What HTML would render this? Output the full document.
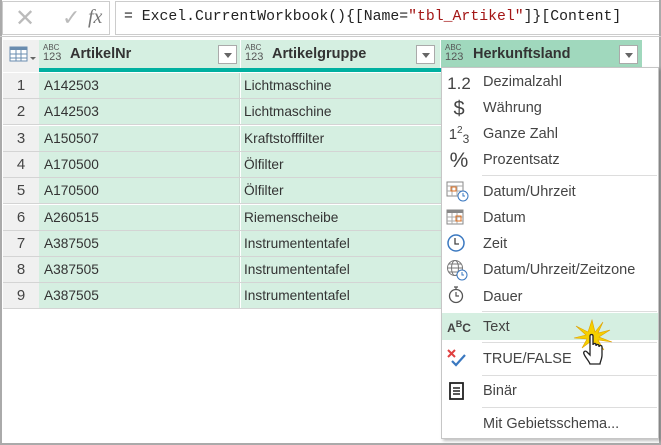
<!DOCTYPE html>
<html><head><meta charset="utf-8"><style>
*{margin:0;padding:0;box-sizing:border-box}
body{width:661px;height:445px;background:#fff;position:relative;overflow:hidden;font-family:"Liberation Sans",sans-serif;font-size:13px;color:#333}
.a{position:absolute}
.row{position:absolute;left:3px;height:26px;width:438px;border-bottom:1px solid #d4d4d4}
.num{position:absolute;left:0;top:0;width:36px;height:25px;background:#f0f0f0;text-align:center;line-height:25px;font-size:15px;color:#444}
.c1{position:absolute;left:36px;top:0;width:201px;height:25px;background:#d5efe1;border-right:1px solid #c8d8cf;line-height:26px;padding-left:5px;font-size:13.7px;color:#333}
.c2{position:absolute;left:238px;top:0;width:200px;height:25px;background:#d5efe1;line-height:26px;padding-left:3px;font-size:13.7px;color:#333}
.hd{position:absolute;top:40px;height:28px;background:#d5efe1}
.abc{position:absolute;top:3px;font-size:8px;line-height:9px;color:#555}
.abc b{font-size:11px;font-weight:normal;display:block;line-height:11px}
.ht{position:absolute;top:7px;font-weight:bold;font-size:14.5px;color:#333}
.dd{position:absolute;top:5px;width:19px;height:19px;background:#fff;border:1px solid #aaa}
.dd:after{content:"";position:absolute;left:5px;top:7px;border-left:4px solid transparent;border-right:4px solid transparent;border-top:5px solid #666}
.mi{position:absolute;left:483px;font-size:14.5px;color:#444;margin-top:3px}
.ic{position:absolute;left:446px;width:26px;text-align:center;color:#444;margin-top:3px}
.sep{position:absolute;left:482px;width:175px;height:1px;background:#ddd}
</style></head><body>
<div class="a" style="left:0;top:0;width:2px;height:445px;background:#aaa"></div>
<div class="a" style="left:0;top:443px;width:661px;height:2px;background:#aaa"></div>
<div class="a" style="left:659px;top:0;width:2px;height:445px;background:#aaa"></div>
<div class="a" style="left:2px;top:1px;width:108px;height:34px;border:1px solid #ccc;background:#fff"></div>
<div class="a" style="left:15px;top:4px;font-size:24px;color:#bbb">✕</div>
<div class="a" style="left:62px;top:5px;font-size:22px;color:#bbb">✓</div>
<div class="a" style="left:88px;top:6px;font-family:'Liberation Serif',serif;font-style:italic;font-size:20px;color:#777">fx</div>
<div class="a" style="left:115px;top:1px;width:544px;height:34px;border:1px solid #ccc;border-right:none"></div>
<div class="a" style="left:124px;top:9px;font-family:'Liberation Mono',monospace;font-size:14.8px;color:#222">= Excel.CurrentWorkbook(){[Name=<span style="color:#a31515">"tbl_Artikel"</span>]}[Content]</div>
<div class="a" style="left:0;top:36px;width:661px;height:1px;background:#ccc"></div>
<div class="a" style="left:3px;top:40px;width:36px;height:32px;background:#f0f0f0"></div>
<svg class="a" style="left:9px;top:46px" width="28" height="18"><rect x="1" y="1" width="17" height="14" fill="#fff" stroke="#6a8caf"/><rect x="1" y="1" width="17" height="3" fill="#6a8caf"/><path d="M1 8H18M1 12H18M7 4V15M12 4V15" stroke="#6a8caf"/><path d="M21 11l3 3 3-3z" fill="#666"/></svg>
<div class="hd" style="left:39px;width:201px"></div>
<div class="hd" style="left:241px;width:199px"></div>
<div class="hd" style="left:441px;width:201px;background:#a0d8bd"></div>
<div class="a" style="left:39px;top:68px;width:402px;height:4px;background:#00b0a0"></div>
<div class="abc" style="left:43px;top:43px">ABC<b>123</b></div><div class="ht" style="left:70px;top:46px">ArtikelNr</div><div class="dd" style="left:218px;top:45px"></div>
<div class="abc" style="left:245px;top:43px">ABC<b>123</b></div><div class="ht" style="left:272px;top:46px">Artikelgruppe</div><div class="dd" style="left:416px;top:45px"></div>
<div class="abc" style="left:445px;top:43px">ABC<b>123</b></div><div class="ht" style="left:473px;top:46px">Herkunftsland</div><div class="dd" style="left:619px;top:45px"></div>
<div class="row" style="top:73px"><div class="num">1</div><div class="c1">A142503</div><div class="c2">Lichtmaschine</div></div>
<div class="row" style="top:99px"><div class="num">2</div><div class="c1">A142503</div><div class="c2">Lichtmaschine</div></div>
<div class="row" style="top:126px"><div class="num">3</div><div class="c1">A150507</div><div class="c2">Kraftstofffilter</div></div>
<div class="row" style="top:152px"><div class="num">4</div><div class="c1">A170500</div><div class="c2">Ölfilter</div></div>
<div class="row" style="top:178px"><div class="num">5</div><div class="c1">A170500</div><div class="c2">Ölfilter</div></div>
<div class="row" style="top:205px"><div class="num">6</div><div class="c1">A260515</div><div class="c2">Riemenscheibe</div></div>
<div class="row" style="top:231px"><div class="num">7</div><div class="c1">A387505</div><div class="c2">Instrumententafel</div></div>
<div class="row" style="top:257px"><div class="num">8</div><div class="c1">A387505</div><div class="c2">Instrumententafel</div></div>
<div class="row" style="top:283px"><div class="num">9</div><div class="c1">A387505</div><div class="c2">Instrumententafel</div></div>
<div class="a" style="left:441px;top:67px;width:218px;height:372px;background:#fff;border:1px solid #c6c6c6;box-shadow:2px 2px 3px rgba(0,0,0,.25)"></div>
<div class="a" style="left:442px;top:313px;width:216px;height:27px;background:#d5efe1"></div>
<div class="sep" style="top:175px"></div><div class="sep" style="top:311px"></div><div class="sep" style="top:342px"></div><div class="sep" style="top:375px"></div><div class="sep" style="top:407px"></div>
<div class="ic" style="top:71px;font-size:17px">1.2</div><div class="mi" style="top:71px">Dezimalzahl</div>
<div class="ic" style="top:95px;font-size:20px">$</div><div class="mi" style="top:97px">Währung</div>
<div class="ic" style="top:122px;font-size:15px">1<sup style="font-size:10px">2</sup><sub style="font-size:12px">3</sub></div><div class="mi" style="top:123px">Ganze Zahl</div>
<div class="ic" style="top:146px;font-size:21px">%</div><div class="mi" style="top:149px">Prozentsatz</div>
<svg class="a" style="left:446px;top:181px" width="24" height="22"><rect x="1" y="1" width="16" height="14" fill="#fff" stroke="#888"/><path d="M1 5H17M1 10H17M6 5V15M11 5V15" stroke="#aaa"/><rect x="5" y="6" width="5" height="4" fill="none" stroke="#e07020"/><circle cx="17" cy="15" r="5" fill="#fff" stroke="#3a78c0"/><path d="M17 12v3h2" stroke="#3a78c0" fill="none"/></svg><div class="mi" style="top:181px">Datum/Uhrzeit</div>
<svg class="a" style="left:446px;top:209px" width="20" height="18"><rect x="1" y="1" width="16" height="14" fill="#fff" stroke="#888"/><rect x="1" y="1" width="16" height="3" fill="#888"/><path d="M1 8H17M1 12H17M6 4V15M11 4V15" stroke="#aaa"/><rect x="10" y="7" width="5" height="5" fill="none" stroke="#e07020"/></svg><div class="mi" style="top:207px">Datum</div>
<svg class="a" style="left:446px;top:233px" width="20" height="20"><circle cx="10" cy="10" r="8" fill="none" stroke="#3a78c0" stroke-width="1.5"/><path d="M9 5v6h4" stroke="#444" fill="none" stroke-width="1.3"/></svg><div class="mi" style="top:233px">Zeit</div>
<svg class="a" style="left:446px;top:259px" width="22" height="22"><circle cx="9" cy="9" r="7.5" fill="none" stroke="#777"/><ellipse cx="9" cy="9" rx="3.5" ry="7.5" fill="none" stroke="#777"/><path d="M1.5 9H16.5M3 5H15M3 13H15" stroke="#777"/><circle cx="16" cy="16" r="5" fill="#fff" stroke="#3a78c0"/><path d="M16 13v3h2" stroke="#3a78c0" fill="none"/></svg><div class="mi" style="top:259px">Datum/Uhrzeit/Zeitzone</div>
<svg class="a" style="left:448px;top:285px" width="18" height="20"><circle cx="8" cy="11" r="6.5" fill="none" stroke="#555" stroke-width="1.3"/><path d="M6 2h4M8 2v3M8 7v4h3" stroke="#555" fill="none" stroke-width="1.2"/></svg><div class="mi" style="top:286px">Dauer</div>
<div class="ic" style="top:316px;font-size:12px;font-weight:bold;color:#444">A<sup style="font-size:9px">B</sup>C</div><div class="mi" style="top:316px">Text</div>
<svg class="a" style="left:446px;top:348px" width="22" height="20"><path d="M2 2l7 7M9 2l-7 7" stroke="#e04040" stroke-width="2"/><path d="M6 13l4 4 9-10" stroke="#3a78c0" stroke-width="2.2" fill="none"/></svg><div class="mi" style="top:348px">TRUE/FALSE</div>
<svg class="a" style="left:448px;top:381px" width="18" height="20"><rect x="2" y="2" width="13" height="16" fill="#fff" stroke="#222" stroke-width="1.8"/><path d="M5 7h7M5 10h7M5 13h7" stroke="#222" stroke-width="1.5"/></svg><div class="mi" style="top:380px">Binär</div>
<div class="mi" style="top:413px">Mit Gebietsschema...</div>
<svg class="a" style="left:570px;top:318px" width="44" height="52"><path d="M22 2L25 14L33 4L28 15L40 12L29 19L42 24L28 22L34 32L25 24L22 34L20 24L12 30L17 21L4 20L16 17L6 8L18 14z" fill="#f5d000" stroke="#e0a000" stroke-width="0.6"/><path d="M20 18c0-2 3-2 3 0v9c0-2 3-2 3 0v1c0-2 3-2 3 0v1c0-2 3-2 3 0v8c0 4-2 7-2 9h-10c-1-3-5-7-6-10-1-2 1-4 3-2l3 3z" fill="#fff" stroke="#222" stroke-width="1.3"/></svg>
</body></html>
